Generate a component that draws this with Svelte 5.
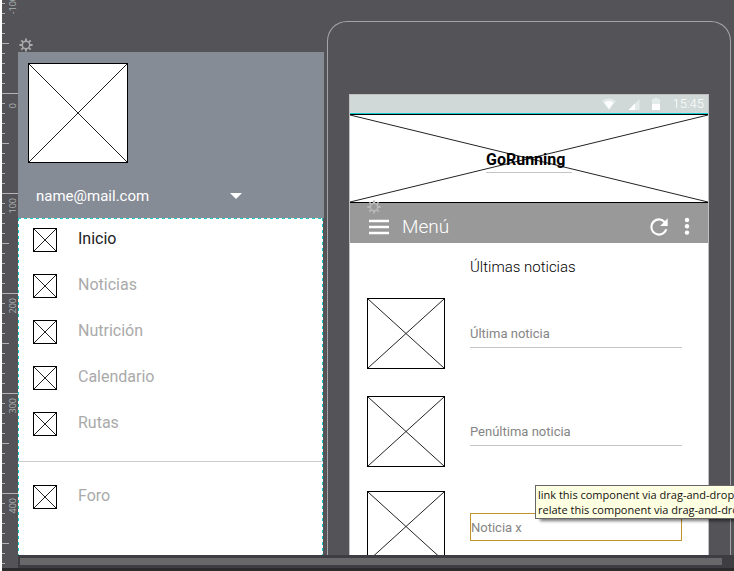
<script>
  const ticks = [-100, 0, 100, 200, 300, 400];
  const mainLinks = ['Inicio', 'Noticias', 'Nutrición', 'Calendario', 'Rutas'];
  const news = ['Última noticia', 'Penúltima noticia', 'Noticia x'];
  let current = $state('Inicio');
  let title = $state('GoRunning');
</script>

{#snippet crossed()}
  <svg class="crossed" viewBox="0 0 100 100" preserveAspectRatio="none" aria-hidden="true">
    <path d="M0 0L100 100M100 0L0 100" />
  </svg>
{/snippet}

{#snippet gear()}
  <svg width="14" height="14" viewBox="0 0 14 14" fill="none" stroke="currentColor" aria-hidden="true">
    <circle cx="7" cy="7" r="3.7" stroke-width="1.5" />
    <path stroke-width="1.9" d="M7 .4V3M7 11v2.6M.4 7H3M11 7h2.6M2.3 2.3l1.8 1.8M9.9 9.9l1.8 1.8M11.7 2.3L9.9 4.1M4.1 9.9l-1.8 1.8" />
  </svg>
{/snippet}

{#snippet link(label)}
  <a href="#{label}" class:current={current === label} onclick={() => (current = label)}>
    <span class="thumb">{@render crossed()}</span>
    <span>{label}</span>
  </a>
{/snippet}

<div class="editor">
  <div class="work">
    <div class="ruler">
      {#each ticks as t}
        <div class="segment"><span>{t}</span></div>
      {/each}
    </div>
    <div class="pane">
      <main class="canvas">
        <section class="drawer">
          <button class="gear outside" aria-label="Opciones del cajón">{@render gear()}</button>
          <header>
            <div class="avatar">{@render crossed()}</div>
            <button class="account">
              <span>name@mail.com</span>
              <svg width="12" height="6" viewBox="0 0 12 6" aria-hidden="true"><path fill="#fff" d="M0 0h12L6 6z" /></svg>
            </button>
          </header>
          <nav>
            {#each mainLinks as label}
              {@render link(label)}
            {/each}
            <hr />
            {@render link('Foro')}
          </nav>
        </section>

        <section class="phone">
          <div class="screen">
            <div class="status">
              <svg width="14" height="14" viewBox="0 0 14 14" aria-hidden="true">
                <path fill="#e2ebea" d="M0 4Q7-1 14 4L7 13z" /><path fill="#fff" d="M2.5 5.5Q7 2.5 11.5 5.5L7 12z" />
              </svg>
              <svg width="12" height="14" viewBox="0 0 12 14" aria-hidden="true">
                <path fill="#e2ebea" d="M11.5 2v11H.5z" /><path fill="#fff" d="M7 6.5V13H.5z" />
              </svg>
              <svg width="8" height="14" viewBox="0 0 8 14" aria-hidden="true">
                <path fill="#e2ebea" d="M0 2h2V1h4v1h2v5H0z" /><path fill="#fff" d="M0 7h8v6H0z" />
              </svg>
              <time>15:45</time>
            </div>
            <div class="banner">
              {@render crossed()}
              <input aria-label="Título" bind:value={title} />
            </div>
            <div class="toolbar">
              <button class="gear inside" aria-label="Opciones de la barra">{@render gear()}</button>
              <button aria-label="Abrir menú">
                <svg width="20" height="16" viewBox="0 0 20 16" aria-hidden="true"><path stroke="#fff" stroke-width="2.4" d="M0 2h20M0 8h20M0 14h20" /></svg>
              </button>
              <h1>Menú</h1>
              <button aria-label="Actualizar">
                <svg width="26" height="26" viewBox="0 0 24 24" aria-hidden="true"><path fill="#fff" d="M17.65 6.35A7.96 7.96 0 0 0 12 4a8 8 0 1 0 7.73 10h-2.08A6 6 0 1 1 12 6c1.66 0 3.14.69 4.22 1.78L13 11h7V4z" /></svg>
              </button>
              <button aria-label="Más">
                <svg width="6" height="26" viewBox="0 0 6 26" fill="#fff" aria-hidden="true"><circle cx="3" cy="6" r="2.2" /><circle cx="3" cy="12.3" r="2.2" /><circle cx="3" cy="18.6" r="2.2" /></svg>
              </button>
            </div>
            <div class="content">
              <h2>Últimas noticias</h2>
              {#each news as item, i}
                <div class="news" class:active={i === 2} class:tight={i === 1}>
                  <div class="photo">{@render crossed()}</div>
                  <input aria-label={item} value={item} />
                </div>
              {/each}
            </div>
          </div>
        </section>

        <div class="tooltip" role="tooltip">link this component via drag-and-drop<br />relate this component via drag-and-drop</div>
      </main>
      <div class="scroll"><div class="handle"></div></div>
    </div>
  </div>
</div>

<style>
  .editor {
    height: 100vh;
    box-sizing: border-box;
    padding-left: 2px;
    overflow: hidden;
    display: flex;
    background: #fff;
    font-family: Roboto, 'Liberation Sans', sans-serif;
  }
  .editor * { box-sizing: border-box; }
  .work {
    flex: 1;
    min-width: 0;
    display: flex;
    background: #545358;
    border-bottom: 3px solid #2b2b2b;
  }
  .ruler {
    width: 16px;
    flex: none;
    overflow: hidden;
    margin-top: -7px;
  }
  .segment {
    height: 100px;
    padding: 0 0 75px;
    display: flex;
    justify-content: flex-end;
    align-items: center;
    background:
      linear-gradient(#b4b4b6, #b4b4b6) 0 0 / 16px 1px no-repeat,
      linear-gradient(#b4b4b6, #b4b4b6) 0 50px / 7px 1px no-repeat,
      repeating-linear-gradient(#b4b4b6 0 1px, transparent 1px 10px) 0 0 / 3px 100px no-repeat;
  }
  .segment span {
    white-space: nowrap;
    writing-mode: vertical-rl;
    transform: rotate(180deg);
    font: 9px/10px 'Open Sans', sans-serif;
    color: #aab0b2;
  }
  .pane {
    flex: 1;
    min-width: 0;
    display: flex;
    flex-direction: column;
  }
  .canvas {
    flex: 1;
    min-height: 0;
    position: relative;
    overflow: hidden;
    display: grid;
    grid-template-columns: minmax(0, 306fr) minmax(0, 404fr);
    grid-template-rows: minmax(0, 1fr);
    column-gap: 3px;
    padding-right: 3px;
  }
  .scroll {
    height: 13px;
    padding: 3px 12px 3px 2px;
    background: #3e3e42;
  }
  .handle { height: 7px; background: #68686a; }

  button {
    border: 0;
    padding: 0;
    background: none;
    color: inherit;
    font: inherit;
    display: flex;
    align-items: center;
  }
  .crossed {
    display: block;
    width: 100%;
    height: 100%;
  }
  .crossed path {
    stroke: #222;
    stroke-width: 1;
    fill: none;
    vector-effect: non-scaling-stroke;
  }

  .drawer {
    margin-top: 52px;
    position: relative;
    display: flex;
    flex-direction: column;
  }
  .gear { position: absolute; }
  .gear.outside { left: 1px; top: -14px; color: #aaa; }
  .gear.inside { left: 17px; top: -3px; color: #b8b8b8; }
  header {
    height: 166px;
    flex: none;
    padding: 11px 10px 0;
    background: #868c96;
  }
  .avatar {
    width: 100px;
    height: 100px;
    border: 1px solid #000;
    background: #fff;
  }
  .account {
    margin: 22px 0 0 8px;
    width: 206px;
    justify-content: space-between;
    font-size: 15px;
    line-height: 22px;
    color: #fff;
  }
  nav {
    flex: 1;
    margin-right: 1px;
    background:
      repeating-linear-gradient(90deg, #1cc 0 3px, transparent 3px 6px) 0 0 / 100% 1px no-repeat,
      repeating-linear-gradient(#1cc 0 3px, transparent 3px 6px) 0 0 / 1px 100% no-repeat,
      repeating-linear-gradient(#1cc 0 3px, transparent 3px 6px) 100% 0 / 1px 100% no-repeat,
      #fff;
  }
  nav a {
    height: 46px;
    padding: 10px 15px 0;
    display: flex;
    gap: 21px;
    font-size: 16px;
    line-height: 22px;
    color: #aaa;
    text-decoration: none;
  }
  nav a.current { color: #222; }
  .thumb {
    width: 24px;
    height: 24px;
    border: 1px solid #000;
  }
  hr {
    border: 0;
    height: 1px;
    margin: 13px 0;
    background: #ccc;
  }

  .phone {
    margin-top: 21px;
    padding: 72px 21px 0;
    border: 1px solid #a4a4a8;
    border-bottom: 0;
    border-radius: 20px 20px 0 0;
    display: flex;
  }
  .screen {
    flex: 1;
    min-width: 0;
    border: 1px solid #c0c0c0;
    border-bottom: 0;
    background: #fff;
  }
  .status {
    height: 19px;
    padding-right: 4px;
    border-bottom: 1px solid #1cc;
    display: flex;
    align-items: center;
    justify-content: flex-end;
    gap: 12px;
    background: #d0d9d7;
    color: #fff;
    font-size: 13px;
    font-weight: 300;
    line-height: 18px;
  }
  .banner {
    height: 89px;
    border: solid #000;
    border-width: 1px 0;
    display: grid;
    grid-template-rows: 87px;
  }
  .banner > :global(*) { grid-area: 1 / 1; }
  input {
    border: 0;
    border-bottom: 1px solid #c4c4c4;
    border-radius: 0;
    padding: 0;
    outline: 0;
    background: none;
    font: 13px/16px Roboto, 'Liberation Sans', sans-serif;
    color: #858585;
  }
  .banner input {
    place-self: center;
    width: 86px;
    height: 28px;
    padding-top: 2px;
    position: relative;
    font-size: 16px;
    font-weight: 700;
    color: #000;
  }
  .toolbar {
    height: 40px;
    padding: 8px 18px 0 19px;
    position: relative;
    display: flex;
    align-items: center;
    background: #999;
    color: #fff;
  }
  h1 {
    flex: 1;
    margin: 0 0 0 13px;
    font-size: 19px;
    line-height: 24px;
    font-weight: 300;
  }
  .toolbar button:last-child { margin-left: 12px; }
  .content { padding: 12px 26px 0 17px; }
  h2 {
    margin: 0 0 19px 103px;
    font-size: 15px;
    line-height: 24px;
    font-weight: 300;
    color: #000;
  }
  .news {
    display: flex;
    gap: 25px;
    margin-bottom: 27px;
  }
  .news.tight { margin-bottom: 24px; }
  .photo {
    flex: none;
    width: 78px;
    height: 71px;
    border: 1px solid #000;
  }
  .news input {
    flex: 1;
    min-width: 0;
    height: 28px;
    margin-top: 22px;
  }
  .news.active input { border: 1px solid #c09428; }

  .tooltip {
    position: absolute;
    left: 517px;
    top: 485px;
    padding: 1px 2px;
    border: 1px solid #666;
    background: #ffffe1;
    box-shadow: 4px 3px 3px -1px #0008;
    font: 11px/15px 'Open Sans', sans-serif;
    color: #111;
    white-space: nowrap;
  }
</style>
